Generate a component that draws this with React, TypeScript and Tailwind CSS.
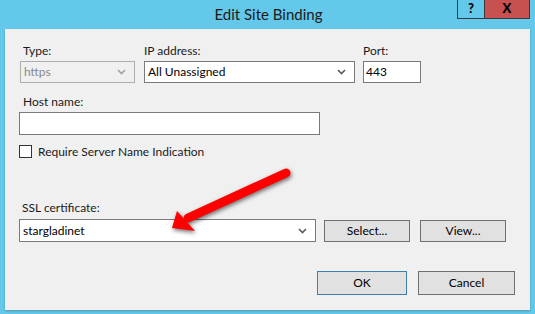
import React from "react";

const font = { fontFamily: 'Lato, "Noto Sans", sans-serif' };

function Chevron({ disabled }: { disabled?: boolean }) {
  return (
    <svg width="9" height="6" viewBox="0 0 9 6" className="shrink-0">
      <path d="M1 1 L4.5 4.5 L8 1" fill="none" stroke={disabled ? "#a0a0a0" : "#5a5a5a"} strokeWidth="1.6" />
    </svg>
  );
}

function Combo({ value, width, height, disabled }: { value: string; width: string; height: string; disabled?: boolean }) {
  return (
    <div
      className={`flex items-center justify-between pl-[3px] pr-[8px] border ${width} ${height} ${
        disabled ? "border-[#adadad] bg-[#f0f0f0] text-[#8a8a8a]" : "border-[#7a7a7a] bg-white text-black"
      }`}
    >
      <span className="leading-none">{value}</span>
      <Chevron disabled={disabled} />
    </div>
  );
}

function Button({ label, width, height, isDefault }: { label: string; width: string; height: string; isDefault?: boolean }) {
  return (
    <div
      className={`flex items-center justify-center border bg-[#e1e1e1] text-black ${width} ${height} ${
        isDefault ? "border-[#3c7fb1]" : "border-[#707070]"
      }`}
    >
      {label}
    </div>
  );
}

export default function App() {
  return (
    <div className="relative w-[535px] h-[314px] bg-[#63c8e9] overflow-hidden text-[12px]" style={font}>
      {/* title bar */}
      <div className="relative h-[29px] flex justify-center">
        <span className="mt-[4px] ml-[2px] text-[15px] text-[#1b1b1b] leading-[20px]">Edit Site Binding</span>
        <div className="absolute top-0 left-[457px] flex h-[19px]">
          <div className="w-[28px] h-full border border-t-0 border-[#3a3a3a] flex items-center justify-center text-[13px] font-black text-black">
            ?
          </div>
          <div className="w-[45px] h-full border border-t-0 border-l-0 border-[#3a3a3a] bg-[#c75050] flex items-center justify-center text-[13px] font-black text-black">
            X
          </div>
        </div>
      </div>

      {/* client area */}
      <div className="ml-[5px] w-[525px] h-[281px] bg-[#f0f0f0] pt-[14px] pl-[14px] pr-[15px] flex flex-col shadow-[0_1px_2px_rgba(0,0,0,0.25)]">
        <div className="flex">
          <div className="flex flex-col ml-[1px]">
            <span className="pl-[3px] h-[16px] leading-[16px] text-[#1a1a1a]">Type:</span>
            <div className="mt-[2px]">
              <Combo value="https" width="w-[115px]" height="h-[22px]" disabled />
            </div>
          </div>
          <div className="flex flex-col ml-[9px]">
            <span className="h-[16px] leading-[16px] text-[#1a1a1a]">IP address:</span>
            <div className="mt-[2px]">
              <Combo value="All Unassigned" width="w-[211px]" height="h-[22px]" />
            </div>
          </div>
          <div className="flex flex-col ml-[8px]">
            <span className="h-[16px] leading-[16px] text-[#1a1a1a]">Port:</span>
            <div className="mt-[2px] w-[58px] h-[22px] border border-[#7a7a7a] bg-white flex items-center pl-[2px] text-black">
              443
            </div>
          </div>
        </div>

        <span className="mt-[11px] pl-[4px] h-[16px] leading-[16px] text-[#1a1a1a]">Host name:</span>
        <div className="mt-[2px] w-[301px] h-[23px] border border-[#7a7a7a] bg-white" />

        <div className="mt-[10px] flex items-center h-[13px]">
          <div className="w-[13px] h-[13px] border border-[#333333] bg-white" />
          <span className="ml-[6px] leading-none text-[#1a1a1a]">Require Server Name Indication</span>
        </div>

        <span className="mt-[42px] pl-[3px] h-[16px] leading-[16px] text-[#1a1a1a]">SSL certificate:</span>
        <div className="mt-[3px] flex items-start">
          <Combo value="stargladinet" width="w-[297px]" height="h-[23px]" />
          <div className="ml-[8px] mt-[1px]">
            <Button label="Select..." width="w-[86px]" height="h-[22px]" />
          </div>
          <div className="ml-[10px] mt-[1px]">
            <Button label="View..." width="w-[86px]" height="h-[22px]" />
          </div>
        </div>

        <div className="mt-[29px] flex justify-end gap-[11px]">
          <Button label="OK" width="w-[90px]" height="h-[24px]" isDefault />
          <Button label="Cancel" width="w-[97px]" height="h-[24px]" />
        </div>
      </div>

      {/* red annotation arrow */}
      <svg
        className="absolute left-0 top-0 pointer-events-none"
        width="535"
        height="314"
        style={{ filter: "drop-shadow(1px 2px 2px rgba(0,0,0,0.55))" }}
      >
        <line x1="286" y1="173" x2="188" y2="218" stroke="#ff0000" strokeWidth="9" strokeLinecap="round" />
        <polygon points="172,228 177,211 195,231" fill="#ff0000" />
      </svg>
    </div>
  );
}
